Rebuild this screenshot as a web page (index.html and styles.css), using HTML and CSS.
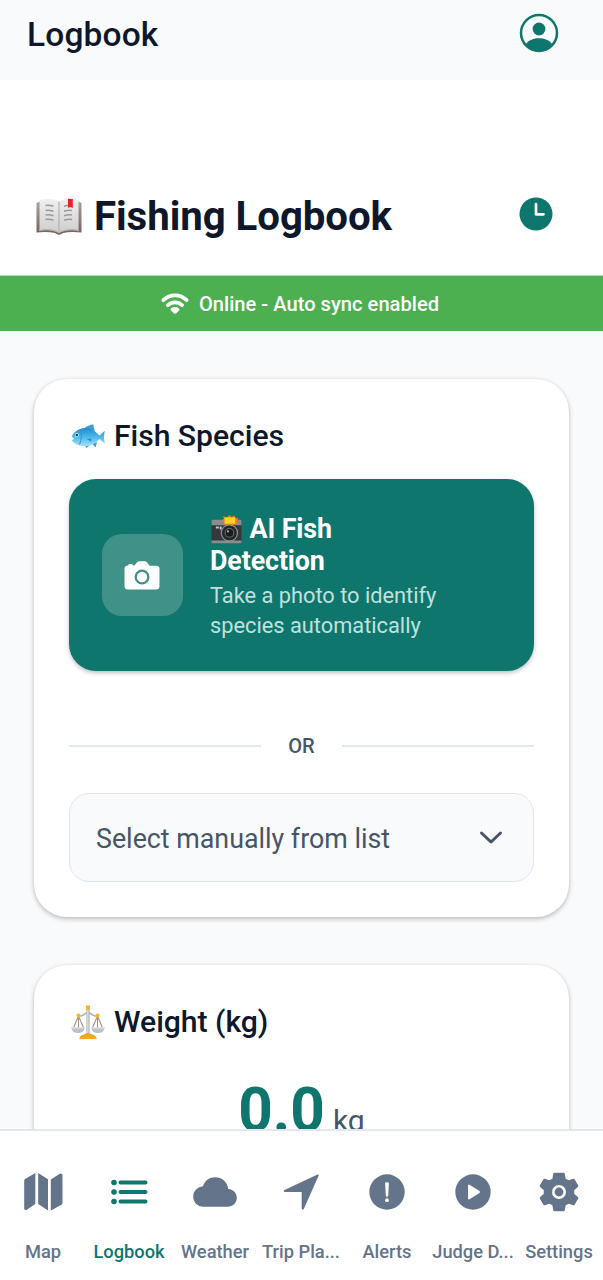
FILE: index.html
```html
<!DOCTYPE html>
<html lang="en">
<head>
<meta charset="utf-8">
<meta name="viewport" content="width=device-width, initial-scale=1">
<title>Logbook</title>
<link rel="stylesheet" href="styles.css">
</head>
<body>
<div class="screen">
  <header class="topbar">
    <span class="topbar-title">Logbook</span>
    <svg class="profile" viewBox="0 0 40 40" aria-label="Profile">
      <defs><clipPath id="disc"><circle cx="20" cy="20" r="18.5"/></clipPath></defs>
      <circle cx="20" cy="20" r="18" fill="none" stroke="#0f766e" stroke-width="2.5"/>
      <circle cx="20" cy="16" r="6.4" fill="#0f766e"/>
      <path clip-path="url(#disc)" d="M6.500 31.500C9.500 27 15 25.3 20 25.3S30.500 27 33.500 31.500L30 39H10Z" fill="#0f766e"/>
    </svg>
  </header>

  <section class="hero">
    <h1 class="hero-title">
      <svg class="emoji-book" viewBox="0 0 46 38" aria-label="open book">
        <defs>
          <linearGradient id="page" x1="0" y1="0" x2="0" y2="1"><stop offset="0" stop-color="#f0f0f0"/><stop offset="1" stop-color="#cecece"/></linearGradient>
          <linearGradient id="cover" x1="0" y1="0" x2="0" y2="1"><stop offset="0" stop-color="#aaa09c"/><stop offset="1" stop-color="#76605b"/></linearGradient>
        </defs>
        <path d="M.5 5L4 3.500H42L45.500 5V34.500Q34 33.500 27 35Q23 38.500 19 35Q12 33.500 .5 34.500Z" fill="url(#cover)"/>
        <path d="M3.500 2Q16 -1 23 3.500V34.500Q15 30 3.500 32.500Z" fill="url(#page)"/>
        <path d="M42.500 2Q30 -1 23 3.500V34.500Q31 30 42.500 32.500Z" fill="url(#page)"/>
        <path d="M23 4V33" stroke="#b5b5b5" stroke-width="1.300"/>
        <path d="M3 32.500Q15 30 23 34.500Q31 30 43 32.500" fill="none" stroke="#bdb5b2" stroke-width="1.200"/>
        <path d="M9.500 7.500q4-.5 8 .7M9.500 12.500q4-.5 8 .7M9.500 17q4-.5 8 .7M9.500 21.500q4-.5 8 .7M28 8.200q4-1.200 8-.7M28 13.200q4-1.200 8-.7M28 17.700q4-1.200 8-.7M28 22.200q4-1.200 8-.7" fill="none" stroke="#9a9a9a" stroke-width="1.500"/>
        <path d="M32 .7L36.800 1V10L34.500 9 32 9.700Z" fill="#f01d2b"/>
      </svg>
      <span>Fishing Logbook</span>
    </h1>
    <svg class="history" viewBox="0 0 34 34" aria-label="History">
      <circle cx="17" cy="17" r="16.500" fill="#0f766e"/>
      <path d="M17 7V17.300H24.500" fill="none" stroke="#fff" stroke-width="2.700" stroke-linecap="round" stroke-linejoin="round"/>
    </svg>
  </section>

  <div class="sync">
    <svg class="wifi" viewBox="0 0 28 22" aria-hidden="true">
      <path d="M2.300 7.200C9 .7 19 .7 25.700 7.200M6.900 12.200C11 8.300 17 8.300 21.100 12.200" fill="none" stroke="#fff" stroke-width="3.700" stroke-linecap="round"/>
      <path d="M9.700 16C12.200 13.400 15.800 13.400 18.300 16Q18.900 16.600 18.300 17.200L15 20.400Q14 21.200 13 20.400L9.700 17.200Q9.100 16.600 9.700 16Z" fill="#fff"/>
    </svg>
    <span>Online - Auto sync enabled</span>
  </div>

  <main class="content">
    <section class="card species">
      <h2 class="card-title">
        <svg class="emoji" viewBox="0 0 34 34" aria-label="fish">
          <defs><linearGradient id="fish" x1="0" y1="0" x2="0" y2="1"><stop offset="0" stop-color="#1e8ccb"/><stop offset=".5" stop-color="#4fb9ec"/><stop offset="1" stop-color="#a5e2fb"/></linearGradient></defs>
          <path d="M13 9.500Q17 5.800 22.500 5.500Q22 8 24 12ZM13 25L15.500 29 19 26M21.500 25L24.500 28.500 26 23" fill="#3a9fd6"/>
          <path d="M.7 17.500Q3 12 9 10Q19 6.500 28.500 16.500L33.700 11.700Q32 18 33.700 24.500L28.500 20Q21 28.500 11 27Q4.500 26 .8 21.500L3 19.700Z" fill="url(#fish)"/>
          <path d="M9 11Q12 17 8.500 25.500" fill="none" stroke="#2f94c9" stroke-width="1"/>
          <path d="M15.500 20l4.500 2.500.5-3" fill="#238fc9"/>
          <circle cx="5.800" cy="16" r="2" fill="#d9f3ff"/><circle cx="5.800" cy="16" r="1.200" fill="#17394b"/>
        </svg>
        <span>Fish Species</span>
      </h2>

      <div class="detect">
        <div class="detect-icon">
          <svg class="camera" viewBox="0 0 36 29" aria-hidden="true">
            <path d="M4 4.500L5 3H8L9 4.500H10.500L13 1.300Q14 .3 15.500 .3H20.500Q22 .3 23 1.300L25.500 4.800H32Q35.500 4.800 35.500 8V25Q35.500 28.500 32 28.500H4Q.5 28.500 .5 25V8Q.5 4.800 4 4.500Z" fill="#fff"/>
            <circle cx="18" cy="16" r="6.300" fill="none" stroke="#409188" stroke-width="2.300"/>
          </svg>
        </div>
        <div class="detect-text">
          <strong class="detect-title">
            <svg class="emoji-camera" viewBox="0 0 32 30" aria-label="camera with flash">
              <path d="M.5 7Q.5 5.500 2 5.500H30Q31.500 5.500 31.500 7V27Q31.500 29 30 29H2Q.5 29 .5 27Z" fill="#35383a"/>
              <path d="M.5 6.500Q.5 5 2 5H30Q31.500 5 31.500 6.500V10.500H.5ZM.5 26.500H31.500V28Q31.500 29.300 30 29.300H2Q.5 29.300 .5 28Z" fill="#8a8d8e"/>
              <path d="M5 12h3v2H5zM9 12h2v3H9z" fill="#c5c8c8"/>
              <circle cx="19" cy="18.500" r="9" fill="#8d9192"/><circle cx="19" cy="18.500" r="7.700" fill="#252829"/><circle cx="19" cy="18.500" r="5" fill="#656b6e"/><circle cx="19" cy="18.500" r="3.900" fill="#191b1c"/><circle cx="17.500" cy="17" r="1.200" fill="#9ca2a5"/>
              <path d="M19 0L21.300 2 24 .5 25.500 3 28.500 3.500 26.500 6 28 9 24.500 9.500 21 11 18 9.500 13.500 10 14 7 11 5.500 13.500 4 12 1 16.500 2.500Z" fill="#f47c20"/>
              <path d="M14 2.500H25V9H14Z" fill="#ffd21c"/>
            </svg>
            AI Fish<br>Detection
          </strong>
          <span class="detect-desc">Take a photo to identify<br>species automatically</span>
        </div>
      </div>

      <div class="divider"><i class="rule"></i><span>OR</span><i class="rule"></i></div>

      <div class="select">
        <span class="select-label">Select manually from list</span>
        <svg class="chevron" viewBox="0 0 24 16" aria-hidden="true"><path d="M2.500 3L12 12 21.500 3" fill="none" stroke="#475569" stroke-width="3" stroke-linecap="round" stroke-linejoin="round"/></svg>
      </div>
    </section>

    <section class="card weight">
      <h2 class="card-title">
        <svg class="emoji" viewBox="0 0 34 34" aria-label="balance scale">
          <path d="M7.500 11Q11 12 17 6.500Q23 12 26.500 11" fill="none" stroke="#aaa" stroke-width="1.500"/>
          <path d="M7.500 11L2 24M7.500 11L13 24M7.500 11V23M26.500 11L21 24M26.500 11L32 24M26.500 11V23" stroke="#a89286" stroke-width="1.100"/>
          <path d="M15.300 4H18.700V29H15.300Z" fill="#b8bbbd"/><path d="M16.300 5H17.300V28H16.300Z" fill="#e4e5e6"/>
          <path d="M.3 22.500H13.700Q13 28 7 28T.3 22.500ZM20.300 22.500H33.700Q33 28 27 28T20.300 22.500Z" fill="#bfc2c4"/>
          <path d="M.3 22.500H13.700V23.500H.3ZM20.300 22.500H33.700V23.500H20.300Z" fill="#e5e5e5"/>
          <path d="M8.300 34Q8.500 30.500 12.500 29.500Q15 28 17 28T21.500 29.500Q25.500 30.500 25.700 34Z" fill="#f7a81b"/>
          <path d="M14.800 .5H19.200L18.700 5H15.300Z" fill="#f5b52a"/>
          <circle cx="7.500" cy="10.500" r="2" fill="#f5b52a"/><circle cx="26.500" cy="10.500" r="2" fill="#f5b52a"/>
        </svg>
        <span>Weight (kg)</span>
      </h2>
      <div class="reading"><span class="value">0.0</span><span class="unit">kg</span></div>
    </section>
  </main>

  <nav class="tabs">
    <a class="tab">
      <svg class="tab-icon" viewBox="0 0 44 44"><path fill="currentColor" d="M3.200 10.500Q3.200 9.500 4.000 9L14.300 3V34L5.500 40Q3.200 40.500 3.200 38.500ZM17.200 3L27 9.200V40.500L17.200 34ZM29.800 9.500L38.800 3.700Q41.500 3.200 41.500 5.500V32.500Q41.500 34 40.500 34.700L29.800 40.500Z"/></svg>
      <span>Map</span>
    </a>
    <a class="tab active">
      <svg class="tab-icon" viewBox="0 0 44 44"><path d="M13.500 12.500H38.500M13.500 22H38.500M13.500 31.500H38.500" stroke="currentColor" stroke-width="4" stroke-linecap="round"/><g fill="currentColor"><circle cx="7" cy="12.500" r="2.800"/><circle cx="7" cy="22" r="2.800"/><circle cx="7" cy="31.500" r="2.800"/></g></svg>
      <span>Logbook</span>
    </a>
    <a class="tab">
      <svg class="tab-icon" viewBox="0 0 44 44"><path fill="currentColor" d="M10.500 36.700C4.500 36.700 .2 32.500 .2 26.500C.2 20.800 4.500 16.800 10 16.200C12 10.500 16.500 7.300 22 7.300C29 7.300 34.500 12 35.300 19C40.500 19.500 43.800 23 43.800 27.800C43.800 33 40 36.700 34.500 36.700Z"/></svg>
      <span>Weather</span>
    </a>
    <a class="tab">
      <svg class="tab-icon" viewBox="0 0 44 44"><path fill="currentColor" d="M38.500 4.500Q40 4 39.700 5.500L25 38.500Q23.500 41 22.700 38.500V22H6Q3.500 21.500 5.500 20Z"/></svg>
      <span>Trip Pla...</span>
    </a>
    <a class="tab">
      <svg class="tab-icon" viewBox="0 0 44 44"><circle cx="22" cy="22" r="17.700" fill="currentColor"/><path d="M20.100 13.300Q20 12.300 22 12.300T23.900 13.300L23.200 25.500Q22.900 26.700 22 26.700T20.800 25.500Z" fill="#fff"/><circle cx="22" cy="30.200" r="1.900" fill="#fff"/></svg>
      <span>Alerts</span>
    </a>
    <a class="tab">
      <svg class="tab-icon" viewBox="0 0 44 44"><circle cx="22" cy="22" r="17.700" fill="currentColor"/><path d="M17 15.500Q17 14 18.500 14.800L28.500 21Q29.500 22 28.500 23L18.500 29.200Q17 30 17 28.500Z" fill="#fff"/></svg>
      <span>Judge D...</span>
    </a>
    <a class="tab">
      <svg class="tab-icon" viewBox="0 0 44 44"><path fill="currentColor" stroke="currentColor" stroke-width="2.500" stroke-linejoin="round" d="M17.500 4H26.500L27.500 9.500L31.500 11.700L36.500 10L40 16L36 19.500V24.500L40 28L36.500 34L31.500 32.300L27.500 34.500L26.500 40H17.500L16.500 34.500L12.500 32.300L7.500 34L4 28L8 24.500V19.500L4 16L7.500 10L12.500 11.700L16.500 9.500Z"/><circle cx="22" cy="22" r="5.700" fill="none" stroke="#fff" stroke-width="2.600"/></svg>
      <span>Settings</span>
    </a>
  </nav>
</div>
</body>
</html>
```
FILE: styles.css
```css
* { box-sizing: border-box; }
body { margin: 0; font-family: Roboto, "Noto Sans", sans-serif; color: #0f172a; }
svg { display: block; flex: none; overflow: visible; }
h1, h2 { margin: 0; }

.screen { width: 603px; height: 1280px; display: flex; flex-direction: column; overflow: hidden; background: #f8fafc; }

.topbar { flex: none; height: 80px; padding: 0 44px 12px 27px; display: flex; align-items: center; justify-content: space-between; }
.topbar-title { padding-top: 2px; font-size: 33.5px; font-weight: 500; line-height: 40px; letter-spacing: .15px; }
.profile { width: 40px; height: 40px; margin-bottom: 2px; }

.hero { flex: none; height: 196px; padding: 76px 50px 0 36px; display: flex; align-items: center; justify-content: space-between; background: #fff; border-bottom: 1px solid #b5d9bc; }
.hero-title { display: flex; align-items: center; gap: 12px; padding-top: 2px; font-size: 40.2px; font-weight: 700; line-height: 48px; letter-spacing: -.05px; }
.emoji-book { width: 46px; height: 38px; }
.history { width: 34px; height: 34px; margin-bottom: 3px; }

.sync { flex: none; height: 55px; padding-right: 3px; display: flex; align-items: center; justify-content: center; gap: 10px; background: #4caf50; color: #fff; font-size: 20.1px; font-weight: 500; letter-spacing: .03px; }
.wifi { width: 28px; height: 22px; }

.content { flex: 1; min-height: 0; overflow: hidden; padding: 48px 34px 0; display: flex; flex-direction: column; gap: 48px; }
.card { flex: none; padding: 35px; border-radius: 33px; background: #fff; box-shadow: 0 2px 5px rgba(0, 0, 0, .24), 0 0 3px rgba(0, 0, 0, .06); }
.species { height: 538px; }
.weight { height: 400px; }
.card-title { display: flex; align-items: center; gap: 9px; height: 44px; padding-left: 2px; font-size: 30.15px; font-weight: 500; line-height: 36px; letter-spacing: -.04px; }
.emoji { width: 34px; height: 34px; }

.detect { height: 192px; margin-top: 21px; padding: 0 33px; display: flex; align-items: center; gap: 27px; border-radius: 27px; background: #0f766e; box-shadow: 0 2px 4px rgba(0, 0, 0, .25); }
.detect-icon { flex: none; width: 81px; height: 82px; display: grid; place-items: center; border-radius: 20px; background: #409188; }
.camera { width: 36px; height: 29px; margin-right: 1px; }
.detect-text { padding-top: 4px; display: flex; flex-direction: column; gap: 4px; color: #fff; }
.detect-title { font-size: 26.8px; font-weight: 700; line-height: 32px; letter-spacing: -.1px; white-space: nowrap; }
.emoji-camera { display: inline-block; width: 31px; height: 29px; margin: 0 1px 0 1px; vertical-align: -6px; }
.detect-desc { font-size: 21.8px; line-height: 30.3px; color: #bfe1dd; white-space: nowrap; }

.divider { height: 24px; margin-top: 63px; display: flex; align-items: center; gap: 27px; font-size: 20.1px; font-weight: 500; line-height: 24px; color: #475569; }
.rule { flex: 1; height: 1.5px; background: #e2e8f0; }

.select { height: 89px; margin-top: 35px; padding: 0 30px 0 26px; display: flex; align-items: center; justify-content: space-between; border: 1px solid #dfe6ee; border-radius: 20px; background: #f8fafc; color: #475569; font-size: 26.8px; line-height: 32px; }
.select-label { padding-top: 2px; }
.chevron { width: 24px; height: 16px; }

.reading { margin-top: 31px; display: flex; align-items: baseline; justify-content: center; gap: 8px; line-height: 72px; }
.value { font-size: 60.3px; font-weight: 700; color: #0f766e; }
.unit { font-size: 30.15px; color: #475569; }

.tabs { flex: none; height: 151px; padding-right: 1px; display: grid; grid-template-columns: repeat(7, 1fr); border-top: 2px solid #e2e8f0; background: #fff; }
.tab { padding-top: 39px; display: flex; flex-direction: column; align-items: center; gap: 27px; color: #64748b; font-size: 18.3px; font-weight: 500; line-height: 22px; white-space: nowrap; }
.tab-icon { width: 44px; height: 44px; }
.active { color: #0f766e; }
```
